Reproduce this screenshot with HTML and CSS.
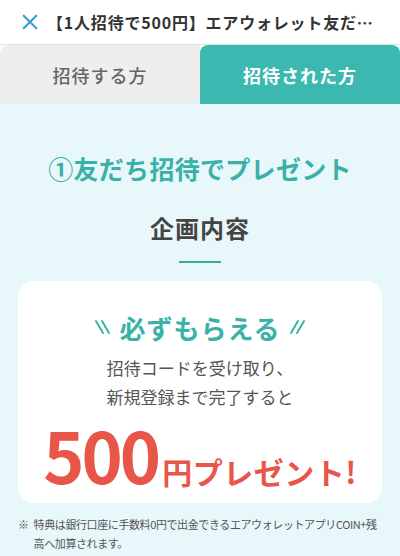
FILE: index.html
```html
<!DOCTYPE html>
<html lang="ja">
<head>
<meta charset="utf-8">
<link rel="stylesheet" href="styles.css">
</head>
<body>
<header class="topbar">
  <svg class="close" viewBox="0 0 20 20" width="18" height="18"><path d="M3 3 L17 17 M17 3 L3 17" stroke="#3a9fd9" stroke-width="2.4" stroke-linecap="round" fill="none"/></svg>
  <div class="title">【1人招待で500円】エアウォレット友だ…</div>
</header>
<nav class="tabs">
  <div class="tab tab-off">招待する方</div>
  <div class="tab tab-on">招待された方</div>
</nav>
<main class="content">
  <h1 class="step">①友だち招待でプレゼント</h1>
  <h2 class="section">企画内容</h2>
  <div class="rule"></div>
  <section class="card">
    <div class="must">
      <svg class="slash" viewBox="0 0 20 20" width="20" height="20"><path d="M3 3 L10 15 M9 3 L16 15" stroke="#3ab2a8" stroke-width="2" stroke-linecap="round"/></svg>
      <span>必ずもらえる</span>
      <svg class="slash" viewBox="0 0 20 20" width="20" height="20"><path d="M11 3 L4 15 M17 3 L10 15" stroke="#3ab2a8" stroke-width="2" stroke-linecap="round"/></svg>
    </div>
    <p class="desc">招待コードを受け取り、<br>新規登録まで完了すると</p>
    <div class="prize"><span class="num">500</span><span class="yen">円プレゼント!</span></div>
  </section>
  <p class="note"><span class="mark">※</span><span>特典は銀行口座に手数料0円で出金できるエアウォレットアプリCOIN+残高へ加算されます。</span></p>
</main>
</body>
</html>
```
FILE: styles.css
```css
* { box-sizing: border-box; margin: 0; padding: 0; }
html, body { width: 400px; height: 556px; overflow: hidden; }
body {
  font-family: "Noto Sans CJK JP", "Noto Sans", sans-serif;
  background: #e8f8fa;
  color: #444;
}
.topbar {
  height: 45px;
  background: #fff;
  border-bottom: 1px solid #e2e2e2;
  display: flex;
  align-items: center;
  padding-left: 21px;
  gap: 8px;
}
.close { flex: none; }
.title {
  font-size: 16px;
  font-weight: 700;
  color: #333;
  white-space: nowrap;
  letter-spacing: 0.8px;
}
.tabs {
  display: flex;
  height: 59px;
  background: #fff;
}
.tab {
  flex: 1;
  display: flex;
  align-items: center;
  justify-content: center;
  font-size: 18px;
  font-weight: 500;
  border-radius: 8px 8px 0 0;
  letter-spacing: 1px;
}
.tab-off { background: #eeeeee; color: #666; border-top-right-radius: 0; }
.tab-on { background: #3bb8b0; color: #fff; font-weight: 700; }
.content {
  display: flex;
  flex-direction: column;
  align-items: center;
  padding: 44px 18px 0;
}
.step {
  font-size: 25px;
  font-weight: 700;
  color: #3ab0a8;
  line-height: 40px;
  letter-spacing: 0.3px;
}
.section {
  margin-top: 20px;
  font-size: 24px;
  font-weight: 700;
  color: #444;
  line-height: 40px;
  letter-spacing: 1px;
}
.rule {
  margin-top: 13px;
  width: 42px;
  height: 2px;
  background: #3aa89f;
}
.card {
  margin-top: 18px;
  width: 364px;
  height: 222px;
  background: #fff;
  border-radius: 16px;
  display: flex;
  flex-direction: column;
  align-items: center;
  padding-top: 30px;
}
.must {
  display: flex;
  align-items: center;
  gap: 6px;
  font-size: 26px;
  font-weight: 700;
  color: #3ab2a8;
  line-height: 34px;
  letter-spacing: 1px;
}
.desc {
  margin-top: 8px;
  font-size: 17px;
  line-height: 29px;
  text-align: center;
  color: #555;
}
.prize {
  margin-top: 8px;
  color: #e8564a;
  font-weight: 700;
  display: flex;
  align-items: baseline;
  line-height: 70px;
}
.num { font-size: 70px; letter-spacing: -3px; margin-right: 4px; }
.yen { font-size: 30px; letter-spacing: 0.5px; }
.note {
  margin-top: 12px;
  align-self: stretch;
  display: flex;
  gap: 5px;
  font-size: 11px;
  line-height: 19px;
  color: #555;
  letter-spacing: -0.4px;
}
.mark { flex: none; }
```
